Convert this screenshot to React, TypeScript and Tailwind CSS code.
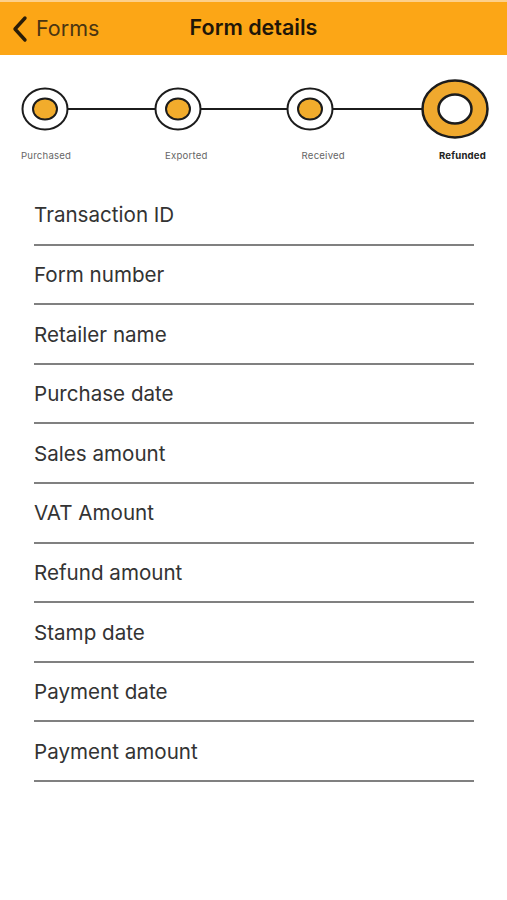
import React from "react";

const fields = [
  "Transaction ID",
  "Form number",
  "Retailer name",
  "Purchase date",
  "Sales amount",
  "VAT Amount",
  "Refund amount",
  "Stamp date",
  "Payment date",
  "Payment amount",
];

function Stepper() {
  return (
    <div className="flex flex-col">
      <svg width="507" height="76" viewBox="0 0 507 76" className="block">
        <line x1="45" y1="39" x2="455" y2="39" stroke="#1c1c1c" strokeWidth="2" />
        {[45, 178, 310].map((cx) => (
          <g key={cx}>
            <ellipse cx={cx} cy="39" rx="22.5" ry="20.5" fill="#ffffff" stroke="#1c1c1c" strokeWidth="2" />
            <ellipse cx={cx} cy="39" rx="12" ry="10.5" fill="#F2AC2C" stroke="#1c1c1c" strokeWidth="2" />
          </g>
        ))}
        <ellipse cx="455" cy="39" rx="32.5" ry="28.5" fill="#F0A92E" stroke="#1c1c1c" strokeWidth="2.5" />
        <ellipse cx="455" cy="39" rx="16.5" ry="14.5" fill="#ffffff" stroke="#1c1c1c" strokeWidth="2.5" />
      </svg>
      <div className="mt-[4px] flex justify-between px-[21px] text-[9.6px] leading-[12px] tracking-[0.2px] text-[#666]">
        <span>Purchased</span>
        <span>Exported</span>
        <span>Received</span>
        <span className="font-bold text-[#222]">Refunded</span>
      </div>
    </div>
  );
}

export default function App() {
  return (
    <div className="w-[507px] h-[900px] bg-white overflow-hidden" style={{ fontFamily: "Inter, 'Liberation Sans', sans-serif" }}>
      <div className="h-[55px] bg-[#FCA616] border-t-2 border-[#FDD08A] relative flex items-center justify-center">
        <div className="absolute left-[10px] top-0 bottom-0 flex items-center gap-[6px]">
          <svg width="20" height="28" viewBox="0 0 20 28">
            <path d="M15 3 L5 14 L15 25" fill="none" stroke="#2a1d08" strokeWidth="3.4" strokeLinecap="round" strokeLinejoin="round" />
          </svg>
          <span className="text-[21.5px] text-[#4a3512]">Forms</span>
        </div>
        <span className="text-[21.5px] font-semibold text-[#1f1608] -mt-[2px]">Form details</span>
      </div>
      <div className="pt-[15px]">
        <Stepper />
      </div>
      <div className="pt-[24px] pl-[34px] pr-[33px]">
        {fields.map((f) => (
          <div key={f} className="h-[59.6px] flex items-center border-b-2 border-[#808080] text-[20.6px] text-[#333] pt-[2px]">
            {f}
          </div>
        ))}
      </div>
    </div>
  );
}
